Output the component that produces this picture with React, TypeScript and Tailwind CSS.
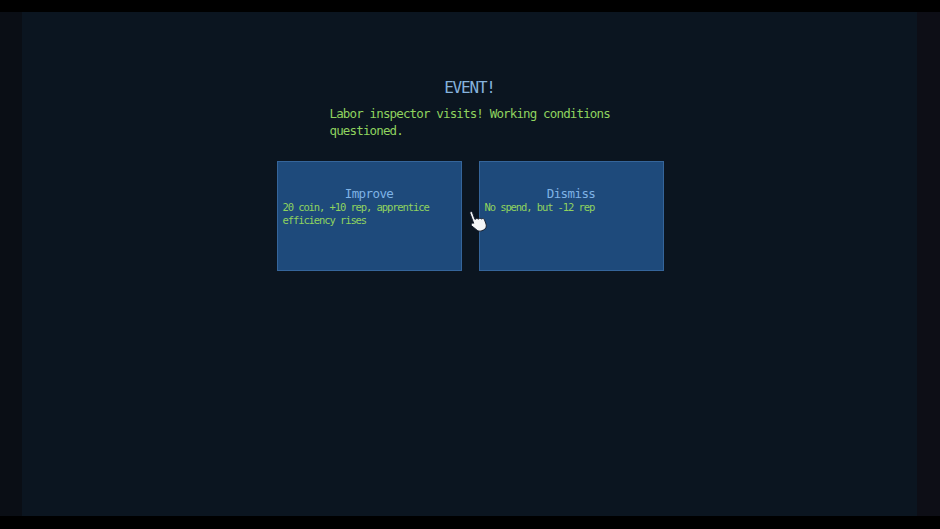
import React from 'react';

type Choice = { title: string; detail: string };

const choices: Choice[] = [
  { title: 'Improve', detail: '20 coin, +10 rep, apprentice efficiency rises' },
  { title: 'Dismiss', detail: 'No spend, but -12 rep' },
];

const mono = { fontFamily: '"DejaVu Sans Mono", "Liberation Mono", monospace' };

function HandCursor() {
  // little white pointing hand, like the game's mouse cursor
  return (
    <svg width="18" height="26" viewBox="0 0 18 26" className="absolute left-[447px] top-[196px] -rotate-[20deg]">
      <path
        d="M5 1.5c1 0 1.7.8 1.7 1.8v7.2l1.1-.3c.9-.2 1.7.3 1.900 1.1l1.2-.2c.9-.1 1.6.4 1.8 1.2l1-.1c1 0 1.8.8 1.8 1.8v4.6c0 2.6-2 4.8-4.6 4.8H8.6c-1.5 0-2.8-.8-3.6-2L1.6 15.7c-.5-.8-.3-1.8.5-2.3.7-.4 1.6-.3 2.1.3l-.1-10.4c0-1 .8-1.8 1.8-1.8z"
        fill="#f4f6f8"
        stroke="#1a2230"
        strokeWidth="0.9"
      />
    </svg>
  );
}

export default function App() {
  return (
    <div className="w-[940px] h-[529px] bg-black flex flex-col overflow-hidden" style={mono}>
      <div className="h-[12px] bg-black" />
      <div className="h-[504px] flex">
        <div className="w-[22px] bg-[#0a0e15]" />

        {/* game panel */}
        <div className="relative flex-1 bg-[#0b1520] flex flex-col items-center pt-[66px]">
          <h1 className="text-[16px] leading-[20px] tracking-[-1.2px] text-[#86b2dc]">EVENT!</h1>

          <p className="mt-[7px] ml-[2px] w-[282px] text-[12.5px] leading-[17px] tracking-[-0.85px] text-[#8fd35f]">
            Labor inspector visits! Working conditions questioned.
          </p>

          <div className="mt-[22px] flex gap-[17px] pl-[1px]">
            {choices.map((c) => (
              <button
                key={c.title}
                className="w-[185px] h-[110px] bg-[#1e4a7b] border border-[#35659a] flex flex-col items-stretch text-left px-[5px] pt-[25px]"
              >
                <span className="text-center text-[12.5px] leading-[14px] tracking-[-0.6px] text-[#7fb3e6]">
                  {c.title}
                </span>
                <span className="text-[10.5px] leading-[13px] tracking-[-1.1px] text-[#8fd35f]">{c.detail}</span>
              </button>
            ))}
          </div>

          <HandCursor />
        </div>

        <div className="w-[23px] bg-[#0d0e16]" />
      </div>
      <div className="flex-1 bg-black" />
    </div>
  );
}
